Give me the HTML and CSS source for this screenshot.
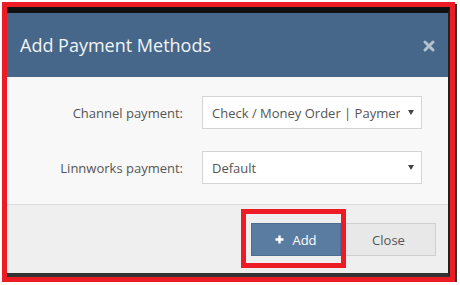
FILE: index.html
```html
<!DOCTYPE html>
<html lang="en">
<head>
    <meta charset="UTF-8" />
    <title>Add Payment Methods</title>
    <link rel="stylesheet" href="styles.css">
</head>
<body>

<div class="frame">
    <div class="modal">
        <header class="modal-header">
            <h1>Add Payment Methods</h1>
            <svg class="close-icon" width="12" height="12" viewBox="0 0 12 12">
                <path d="M2 2 L10 10 M10 2 L2 10" stroke="#b4c2d0" stroke-width="3" stroke-linecap="round"/>
            </svg>
        </header>

        <div class="modal-body">
            <div class="form-row">
                <label>Channel payment:</label>
                <div class="select">
                    <span class="select-text">Check / Money Order | Payment</span>
                    <span class="arrow"></span>
                </div>
            </div>
            <div class="form-row">
                <label>Linnworks payment:</label>
                <div class="select">
                    <span class="select-text">Default</span>
                    <span class="arrow"></span>
                </div>
            </div>
        </div>

        <footer class="modal-footer">
            <button class="btn btn-primary">
                <svg width="9" height="9" viewBox="0 0 9 9">
                    <path d="M4.5 0.5 V8.5 M0.5 4.5 H8.5" stroke="#fff" stroke-width="2.4"/>
                </svg>
                Add
                <span class="highlight"></span>
            </button>
            <button class="btn btn-default">Close</button>
        </footer>
    </div>
</div>

</body>
</html>
```

FILE: styles.css
```css
body {
    margin: 0;
    background: #fff;
    font-family: "Open Sans", Arial, sans-serif;
}
.frame {
    box-sizing: border-box;
    width: 453px;
    height: 280px;
    margin: 2px 0 0 2px;
    border: 5px solid #ed1c24;
    box-shadow: 2px 2px 0 #333;
}
.modal {
    box-sizing: border-box;
    height: 100%;
    display: flex;
    flex-direction: column;
    border-top: 6px solid #111;
    border-bottom: 4px solid #333;
    border-right: 2px solid #222;
    background: #f8f8f8;
}
.modal-header {
    height: 64px;
    flex: none;
    display: flex;
    align-items: center;
    justify-content: space-between;
    padding: 0 13px 0 13px;
    background: #46678a;
}
.modal-header h1 {
    margin: 0;
    font-size: 18px;
    font-weight: 400;
    color: #f2f4f6;
}
.close-icon {
    margin-top: 2px;
}
.modal-body {
    padding: 19px 26px 20px 0;
    display: flex;
    flex-direction: column;
    gap: 22px;
    border-bottom: 1px solid #dcdcdc;
}
.form-row {
    display: flex;
    align-items: center;
    gap: 19px;
}
.form-row label {
    width: 176px;
    text-align: right;
    font-size: 13px;
    color: #555;
}
.select {
    box-sizing: border-box;
    width: 220px;
    height: 33px;
    display: flex;
    align-items: center;
    padding: 0 7px 0 9px;
    background: #fff;
    border: 1px solid #d4d4d4;
    font-size: 13px;
    color: #555;
}
.select-text {
    flex: 1;
    overflow: hidden;
    white-space: nowrap;
}
.arrow {
    margin-left: 8px;
    border-left: 3px solid transparent;
    border-right: 3px solid transparent;
    border-top: 5px solid #444;
}
.modal-footer {
    flex: 1;
    display: flex;
    justify-content: flex-end;
    align-items: flex-start;
    padding: 18px 12px 0 0;
    background: #efefef;
}
.btn {
    box-sizing: border-box;
    height: 33px;
    font-family: "Open Sans", Arial, sans-serif;
    font-size: 13px;
    border: 1px solid;
    display: flex;
    align-items: center;
    justify-content: center;
    gap: 8px;
}
.btn-primary {
    position: relative;
    width: 90px;
    background: #5b7ca1;
    border-color: #4d6d90;
    color: #fff;
}
.btn-default {
    width: 95px;
    background: #e8e8e8;
    border-color: #cfcfcf;
    color: #555;
}
.highlight {
    position: absolute;
    left: -11px;
    top: -15px;
    width: 105px;
    height: 59px;
    box-sizing: border-box;
    border: 5px solid #ed1c24;
}
```
